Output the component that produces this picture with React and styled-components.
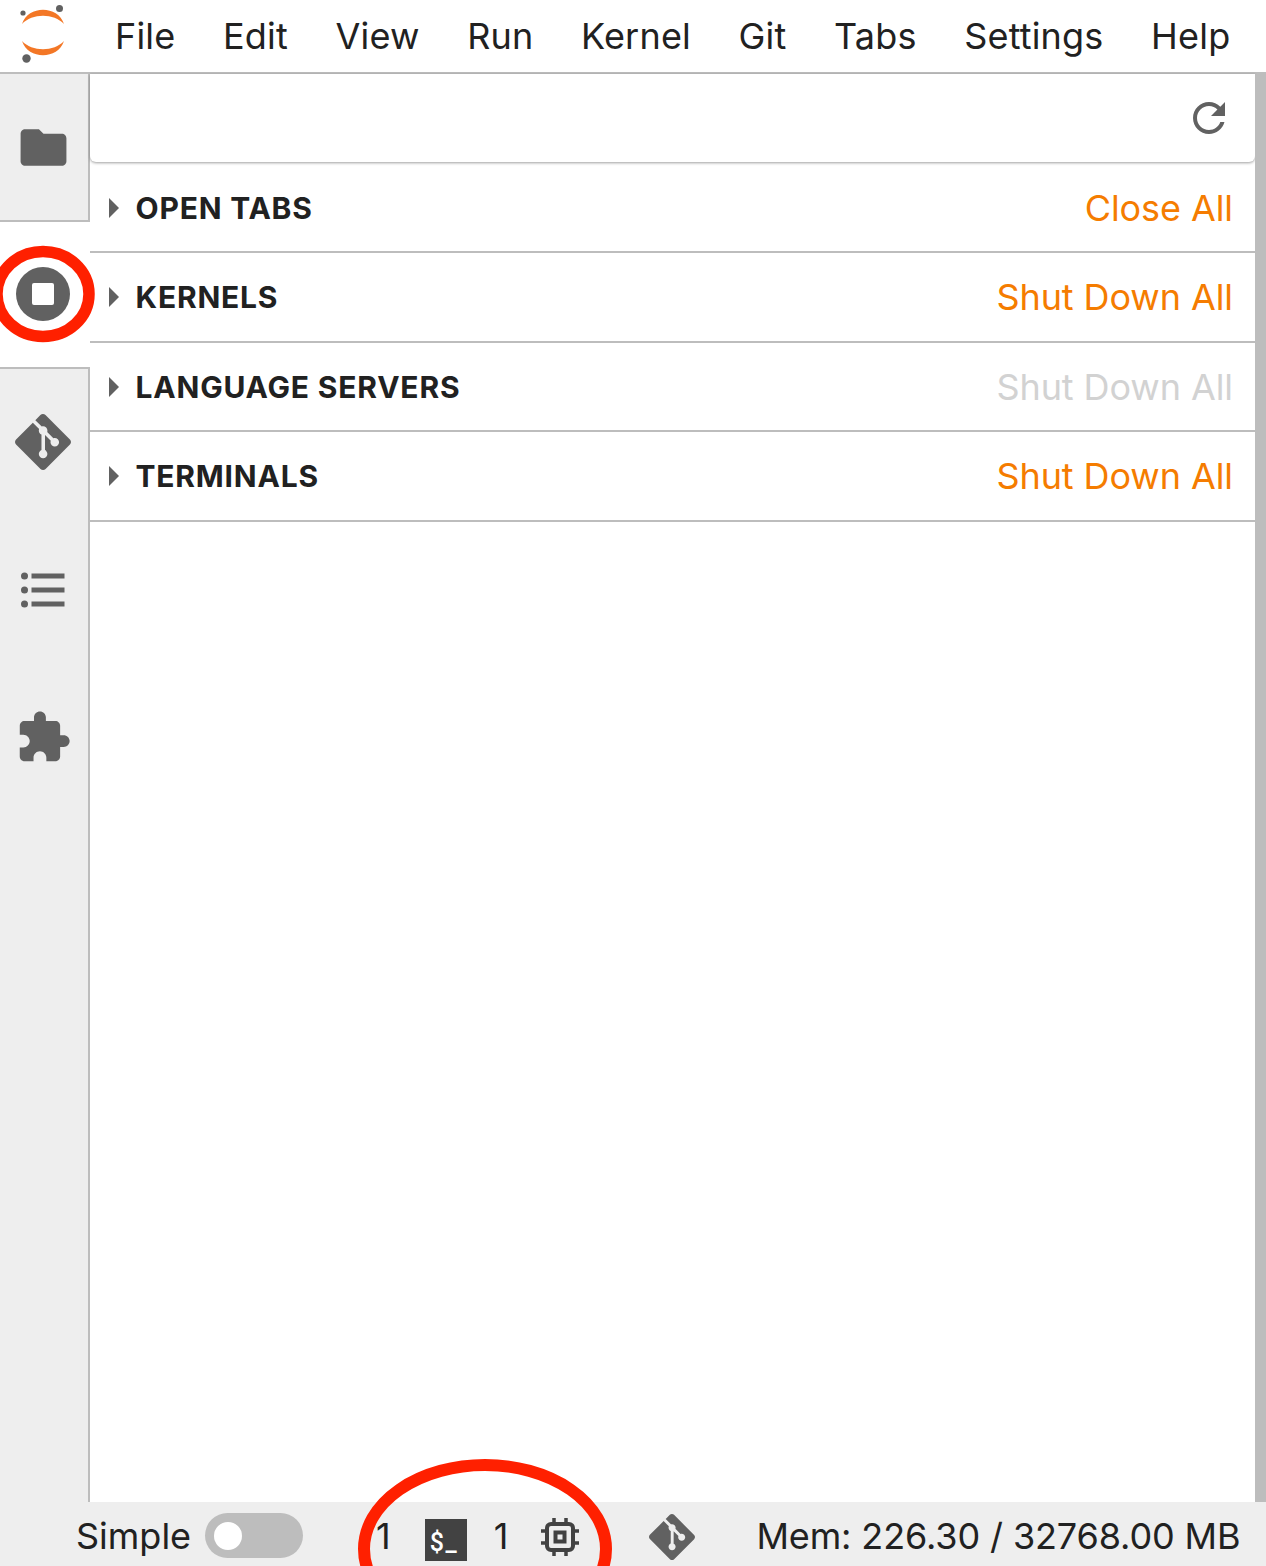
import React from 'react';
import styled, { createGlobalStyle } from 'styled-components';

const GlobalStyle = createGlobalStyle`
	html, body {
		margin: 0;
		padding: 0;
		background: #fff;
	}
	body {
		font-family: Inter, "Liberation Sans", sans-serif;
		color: #212121;
		overflow: hidden;
	}
`;

const Page = styled.div`
	position: relative;
	width: 1266px;
	height: 1566px;
	display: flex;
	flex-direction: column;
	overflow: hidden;
`;

const TopBar = styled.div`
	height: 72px;
	flex: none;
	display: flex;
	align-items: center;
	border-bottom: 2px solid #bdbdbd;
	background: #fff;
`;

const LogoBox = styled.div`
	width: 115px;
	height: 72px;
	flex: none;
`;

const Menu = styled.div`
	display: flex;
	gap: 47.5px;
	font-size: 36px;
	letter-spacing: 0.2px;
`;

const Main = styled.div`
	flex: 1;
	min-height: 0;
	display: flex;
`;

const Sidebar = styled.div`
	width: 88px;
	flex: none;
	display: flex;
	flex-direction: column;
	background: #eeeeee;
	border-right: 2px solid #bdbdbd;
`;

const Tab = styled.div`
	height: ${(p) => p.$height}px;
	flex: none;
	box-sizing: border-box;
	display: flex;
	align-items: center;
	justify-content: center;
	color: #616161;
	background: ${(p) => (p.$active ? '#fff' : 'transparent')};
	margin-right: ${(p) => (p.$active ? '-2px' : '0')};
	padding-right: ${(p) => (p.$active ? '4px' : '2px')};
	padding-bottom: ${(p) => (p.$active ? '1px' : '0')};
	border-top: ${(p) => (p.$topLine ? '2px solid #bdbdbd' : 'none')};
	border-bottom: ${(p) => (p.$bottomLine ? '2px solid #bdbdbd' : 'none')};
`;

const Panel = styled.div`
	flex: 1;
	min-width: 0;
	display: flex;
	flex-direction: column;
	background: #fff;
`;

const PanelToolbar = styled.div`
	height: 88px;
	flex: none;
	display: flex;
	align-items: center;
	justify-content: flex-end;
	padding-right: 22px;
	margin-bottom: 1.5px;
	color: #616161;
	border-bottom-left-radius: 6px;
	border-bottom-right-radius: 6px;
	box-shadow: 0 1px 3px rgba(0, 0, 0, 0.38);
`;

const Section = styled.div`
	height: 89.5px;
	flex: none;
	box-sizing: border-box;
	display: flex;
	align-items: center;
	padding: 1px 22px 0 19px;
	border-bottom: 2px solid #bdbdbd;
`;

const Caret = styled.span`
	width: 0;
	height: 0;
	flex: none;
	margin-right: 16.5px;
	border-left: 10px solid #616161;
	border-top: 10px solid transparent;
	border-bottom: 10px solid transparent;
`;

const SectionTitle = styled.span`
	flex: 1;
	font-size: 30px;
	font-weight: 700;
	letter-spacing: 0.8px;
	color: #212121;
`;

const SectionAction = styled.span`
	font-size: 36px;
	letter-spacing: -0.08px;
	color: ${(p) => (p.$disabled ? '#d2d2d2' : '#f57c00')};
`;

const Scrollbar = styled.div`
	width: 11px;
	flex: none;
	background: #bdbdbd;
`;

const StatusBar = styled.div`
	height: 64px;
	flex: none;
	box-sizing: border-box;
	display: flex;
	align-items: center;
	padding: 3px 0 0 76px;
	background: #eeeeee;
	font-size: 36px;
	color: #212121;
`;

const Toggle = styled.div`
	width: 98px;
	height: 45px;
	margin: 0 73px 0 14px;
	flex: none;
	box-sizing: border-box;
	padding: 9px;
	border-radius: 23px;
	background: #bdbdbd;
`;

const ToggleKnob = styled.div`
	width: 28px;
	height: 28px;
	border-radius: 50%;
	background: #fff;
`;

const Count = styled.span`
	margin-left: ${(p) => p.$left}px;
	margin-right: ${(p) => p.$right}px;
`;

const TerminalBadge = styled.div`
	width: 42px;
	height: 42px;
	flex: none;
	box-sizing: border-box;
	position: relative;
	top: 4px;
	padding: 8px 0 0 5px;
	background: #424242;
	color: #fff;
	font-family: Roboto, sans-serif;
	font-size: 25px;
	font-weight: 500;
	letter-spacing: 1.5px;
	line-height: 32px;
	white-space: nowrap;
	overflow: hidden;
`;

const ChipBox = styled.div`
	display: flex;
	position: relative;
	top: 1px;
	margin-left: 3px;
`;

const StatusGit = styled.div`
	margin-left: 70px;
	display: flex;
	position: relative;
	top: 1px;
	color: #616161;
`;

const Memory = styled.span`
	margin-left: 61px;
	letter-spacing: -0.12px;
	white-space: nowrap;
`;

const Annotations = styled.svg`
	position: absolute;
	left: 0;
	top: 0;
	pointer-events: none;
`;

const Icon = ({ size, children, viewBox = '0 0 24 24' }) => (
	<svg width={size} height={size} viewBox={viewBox} fill="currentColor">
		{children}
	</svg>
);

const GIT_PATH =
	'M23.546 10.93L13.067.452c-.604-.603-1.582-.603-2.188 0L8.708 2.627l2.76 2.76c.645-.215 1.379-.07 1.889.441.516.515.658 1.258.438 1.9l2.658 2.66c.645-.223 1.387-.078 1.9.435.721.72.721 1.884 0 2.604-.719.719-1.881.719-2.6 0-.539-.541-.674-1.337-.404-1.996L12.86 8.955v6.525c.176.086.342.203.488.348.713.721.713 1.883 0 2.6-.719.721-1.889.721-2.609 0-.719-.719-.719-1.879 0-2.598.182-.18.387-.316.605-.406V8.835c-.217-.091-.424-.222-.6-.401-.545-.545-.676-1.342-.396-2.009L7.636 3.7.45 10.881c-.6.605-.6 1.584 0 2.189l10.48 10.477c.604.604 1.582.604 2.186 0l10.43-10.43c.605-.603.605-1.582 0-2.187';

const GitIcon = ({ size }) => (
	<Icon size={size}>
		<path d={GIT_PATH} />
	</Icon>
);

const JupyterLogo = () => (
	<svg width="88" height="72" viewBox="0 0 88 72">
		<path d="M22 24C28 5 58 5 64 24C54 13 32 13 22 24Z" fill="#f37726" />
		<path d="M22 41C32 52 54 52 64 41C58 60 28 60 22 41Z" fill="#f37726" />
		<circle cx="59.5" cy="8.5" r="3.5" fill="#616161" />
		<circle cx="23" cy="13" r="2.6" fill="#616161" />
		<circle cx="26.5" cy="58.5" r="4.2" fill="#616161" />
	</svg>
);

const StopIcon = () => (
	<svg width="54" height="54" viewBox="0 0 54 54">
		<circle cx="27" cy="27" r="27" fill="currentColor" />
		<rect x="16" y="16" width="22" height="22" rx="2" fill="#fff" />
	</svg>
);

const ListIcon = () => (
	<svg width="46" height="40" viewBox="0 0 46 40" fill="currentColor">
		<circle cx="4.5" cy="7" r="3.5" />
		<circle cx="4.5" cy="21" r="3.5" />
		<circle cx="4.5" cy="35" r="3.5" />
		<rect x="11.5" y="4.5" width="33" height="5" />
		<rect x="11.5" y="18.5" width="33" height="5" />
		<rect x="11.5" y="32.5" width="33" height="5" />
	</svg>
);

const ChipIcon = () => (
	<svg width="38" height="38" viewBox="0 0 38 38" fill="none" stroke="#424242">
		<rect x="6" y="6" width="26" height="26" rx="4" strokeWidth="4" />
		<rect x="14.5" y="14.5" width="9" height="9" strokeWidth="4" />
		<path
			d="M13 0v5M25 0v5M13 33v5M25 33v5M0 13h5M0 25h5M33 13h5M33 25h5"
			strokeWidth="3.5"
		/>
	</svg>
);

const menuItems = ['File', 'Edit', 'View', 'Run', 'Kernel', 'Git', 'Tabs', 'Settings', 'Help'];

const sections = [
	{ title: 'OPEN TABS', action: 'Close All' },
	{ title: 'KERNELS', action: 'Shut Down All' },
	{ title: 'LANGUAGE SERVERS', action: 'Shut Down All', disabled: true },
	{ title: 'TERMINALS', action: 'Shut Down All' },
];

function App() {
	return (
		<Page>
			<GlobalStyle />
			<TopBar>
				<LogoBox>
					<JupyterLogo />
				</LogoBox>
				<Menu>
					{menuItems.map((item) => (
						<span key={item}>{item}</span>
					))}
				</Menu>
			</TopBar>
			<Main>
				<Sidebar>
					<Tab $height={148} $bottomLine>
						<Icon size={55}>
							<path d="M10 4H4c-1.1 0-1.99.9-1.99 2L2 18c0 1.1.9 2 2 2h16c1.1 0 2-.9 2-2V8c0-1.1-.9-2-2-2h-8l-2-2z" />
						</Icon>
					</Tab>
					<Tab $height={145} $active>
						<StopIcon />
					</Tab>
					<Tab $height={148} $topLine>
						<GitIcon size={56} />
					</Tab>
					<Tab $height={148}>
						<ListIcon />
					</Tab>
					<Tab $height={148}>
						<Icon size={57}>
							<path d="M20.5 11H19V7c0-1.1-.9-2-2-2h-4V3.5C13 2.12 11.88 1 10.5 1S8 2.12 8 3.5V5H4c-1.1 0-1.99.9-1.99 2v3.8H3.5c1.49 0 2.7 1.21 2.7 2.7s-1.21 2.7-2.7 2.7H2V20c0 1.1.9 2 2 2h3.8v-1.5c0-1.49 1.21-2.7 2.7-2.7 1.49 0 2.7 1.21 2.7 2.7V22H17c1.1 0 2-.9 2-2v-4h1.5c1.38 0 2.5-1.12 2.5-2.5S21.88 11 20.5 11z" />
						</Icon>
					</Tab>
				</Sidebar>
				<Panel>
					<PanelToolbar>
						<Icon size={48}>
							<path d="M17.65 6.35C16.2 4.9 14.21 4 12 4c-4.42 0-7.99 3.58-7.99 8s3.57 8 7.99 8c3.73 0 6.84-2.55 7.73-6h-2.08c-.82 2.33-3.04 4-5.65 4-3.31 0-6-2.69-6-6s2.69-6 6-6c1.66 0 3.14.69 4.22 1.78L13 11h7V4l-2.35 2.35z" />
						</Icon>
					</PanelToolbar>
					{sections.map((section) => (
						<Section key={section.title}>
							<Caret />
							<SectionTitle>{section.title}</SectionTitle>
							<SectionAction $disabled={section.disabled}>{section.action}</SectionAction>
						</Section>
					))}
				</Panel>
				<Scrollbar />
			</Main>
			<StatusBar>
				<span>Simple</span>
				<Toggle>
					<ToggleKnob />
				</Toggle>
				<Count $left={0} $right={34}>1</Count>
				<TerminalBadge>$_</TerminalBadge>
				<Count $left={27} $right={30}>1</Count>
				<ChipBox>
					<ChipIcon />
				</ChipBox>
				<StatusGit>
					<GitIcon size={46} />
				</StatusGit>
				<Memory>Mem: 226.30 / 32768.00 MB</Memory>
			</StatusBar>
			<Annotations width="1266" height="1566" fill="none" stroke="#ff2000">
				<ellipse cx="43" cy="294" rx="46" ry="42.5" strokeWidth="11.5" />
				<ellipse cx="485" cy="1549" rx="121" ry="84" strokeWidth="12" />
			</Annotations>
		</Page>
	);
}

export default App;
